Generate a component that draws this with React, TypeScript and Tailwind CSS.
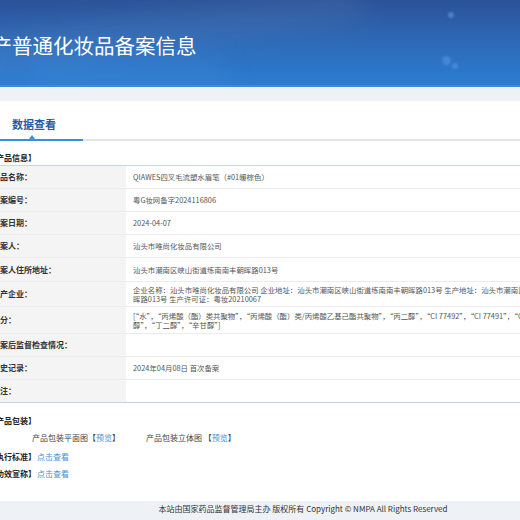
const rows = [
  { label: "产品名称：", value: "QIAWES四叉毛流塑水眉笔（#01暖棕色）", h: "h-[23px]" },
  { label: "备案编号：", value: "粤G妆网备字2024116806", h: "h-[23px]" },
  { label: "备案日期：", value: "2024-04-07", h: "h-[23px]" },
  { label: "备案人：", value: "汕头市唯尚化妆品有限公司", h: "h-[23px]" },
  { label: "备案人住所地址：", value: "汕头市潮南区峡山街道练南南丰朝晖路013号", h: "h-[24px]" },
  {
    label: "生产企业：",
    value: [
      "企业名称：汕头市唯尚化妆品有限公司 企业地址：汕头市潮南区峡山街道练南南丰朝晖路013号 生产地址：汕头市潮南区峡山街道练南南丰朝",
      "晖路013号 生产许可证：粤妆20210067",
    ],
    h: "h-[25px]",
  },
  {
    label: "成分：",
    value: [
      "[\u201c水\u201d，\u201c丙烯酸（酯）类共聚物\u201d，\u201c丙烯酸（酯）类/丙烯酸乙基己酯共聚物\u201d，\u201c丙二醇\u201d，\u201cCI 77492\u201d，\u201cCI 77491\u201d，\u201cCI 77499\u201d，\u201c苯氧乙",
      "醇\u201d，\u201c丁二醇\u201d，\u201c辛甘醇\u201d]",
    ],
    h: "h-[27px]",
  },
  { label: "备案后监督检查情况：", value: "", h: "h-[23px]" },
  { label: "历史记录：", value: "2024年04月08日 首次备案", h: "h-[23px]" },
  { label: "备注：", value: "", h: "h-[23px]" },
];

export default function App() {
  return (
    <div className="w-[520px] h-[520px] overflow-hidden bg-white font-['Noto_Sans_CJK_SC','Noto_Sans',sans-serif] text-[#333]">
      <div className="-ml-[12px] w-[630px] flex flex-col">
        {/* header banner */}
        <div className="relative h-[87px] overflow-hidden border-b-2 border-[#3b8be0] bg-gradient-to-b from-[#2a5298] via-[#2d6ab7] to-[#2b7dd2]">
          <div className="absolute -left-[40px] top-[10px] h-[40px] w-[420px] -rotate-[8deg] rounded-full bg-white/5 blur-md" />
          <div className="absolute left-[40px] top-[55px] h-[40px] w-[200px] rounded-full bg-[#4a8fe0]/20 blur-md" />
          <div className="absolute left-[460px] top-[12px] h-[6px] w-[6px] rounded-full bg-[#6aa8ea]/50 blur-[1px]" />
          <div className="absolute left-[454px] top-[56px] h-[9px] w-[9px] rounded-full bg-[#6aa8ea]/40 blur-[1px]" />
          <div className="absolute left-[464px] top-[63px] h-[6px] w-[6px] rounded-full bg-[#6aa8ea]/40 blur-[1px]" />
          <div className="relative flex h-full items-center pt-[5px]">
            <h1 className="-ml-[17px] text-[20.5px] leading-none font-normal text-white whitespace-nowrap">
              国产普通化妆品备案信息
            </h1>
          </div>
        </div>
        <div className="h-[14px] bg-[#eef2f6]" />

        {/* tab */}
        <div className="flex h-[40px] border-b-2 border-[#e6e6e6]">
          <div className="relative -mb-[2px] flex w-[95px] items-center border-b-2 border-[#3b8ee3] pl-[24px] pt-[8px]">
            <span className="text-[11px] leading-none font-bold text-[#1f5ea6]">数据查看</span>
            <span className="absolute bottom-0 left-[41px] h-0 w-0 border-x-[3px] border-b-[4px] border-x-transparent border-b-[#3b8ee3]" />
          </div>
        </div>

        <div className="pt-[13px] pb-[3px] text-[8px] leading-[8px] font-bold text-[#222]">【产品信息】</div>

        {/* info table */}
        <div className="flex flex-col border-t border-[#c8d6ea]">
          {rows.map((row, i) => (
            <div
              key={row.label}
              className={`flex ${row.h} border-b ${i === rows.length - 1 ? "border-[#c3d1e6]" : "border-[#ececec]"}`}
            >
              <div className="flex w-[138px] shrink-0 items-center bg-[#f4f4f4] pl-[4px] text-[8px] leading-none font-bold text-[#333]">
                {row.label}
              </div>
              <div className="flex flex-1 items-center pl-[7px] text-[7.4px] text-[#555] whitespace-nowrap">
                {Array.isArray(row.value) ? (
                  <div className="flex flex-col leading-[9px]">
                    {row.value.map((line) => (
                      <span key={line}>{line}</span>
                    ))}
                  </div>
                ) : (
                  <span className="leading-none">{row.value}</span>
                )}
              </div>
            </div>
          ))}
        </div>

        <div className="pt-[14px] text-[8px] leading-[8px] font-bold text-[#222]">【产品包装】</div>
        <div className="mt-[9px] flex gap-[26px] pl-[44px] text-[8px] leading-[8px] text-[#444]">
          <span>
            产品包装平面图【<span className="text-[#4a90d9]">预览</span>】
          </span>
          <span>
            产品包装立体图 【<span className="text-[#4a90d9]">预览</span>】
          </span>
        </div>
        <div className="mt-[11px] flex text-[8px] leading-[8px]">
          <span className="font-bold text-[#222]">【执行标准】</span>
          <span className="ml-[1px] text-[#4a90d9]">点击查看</span>
        </div>
        <div className="mt-[9px] flex text-[8px] leading-[8px]">
          <span className="font-bold text-[#222]">【功效宣称】</span>
          <span className="ml-[1px] text-[#4a90d9]">点击查看</span>
        </div>

        {/* footer */}
        <div className="mt-[23px] flex h-[30px] justify-center bg-[#eef2f6] pt-[4px]">
          <span className="text-[8px] leading-[8px] text-[#333] whitespace-nowrap">
            本站由国家药品监督管理局主办 版权所有 Copyright © NMPA All Rights Reserved
          </span>
        </div>
      </div>
    </div>
  );
}
